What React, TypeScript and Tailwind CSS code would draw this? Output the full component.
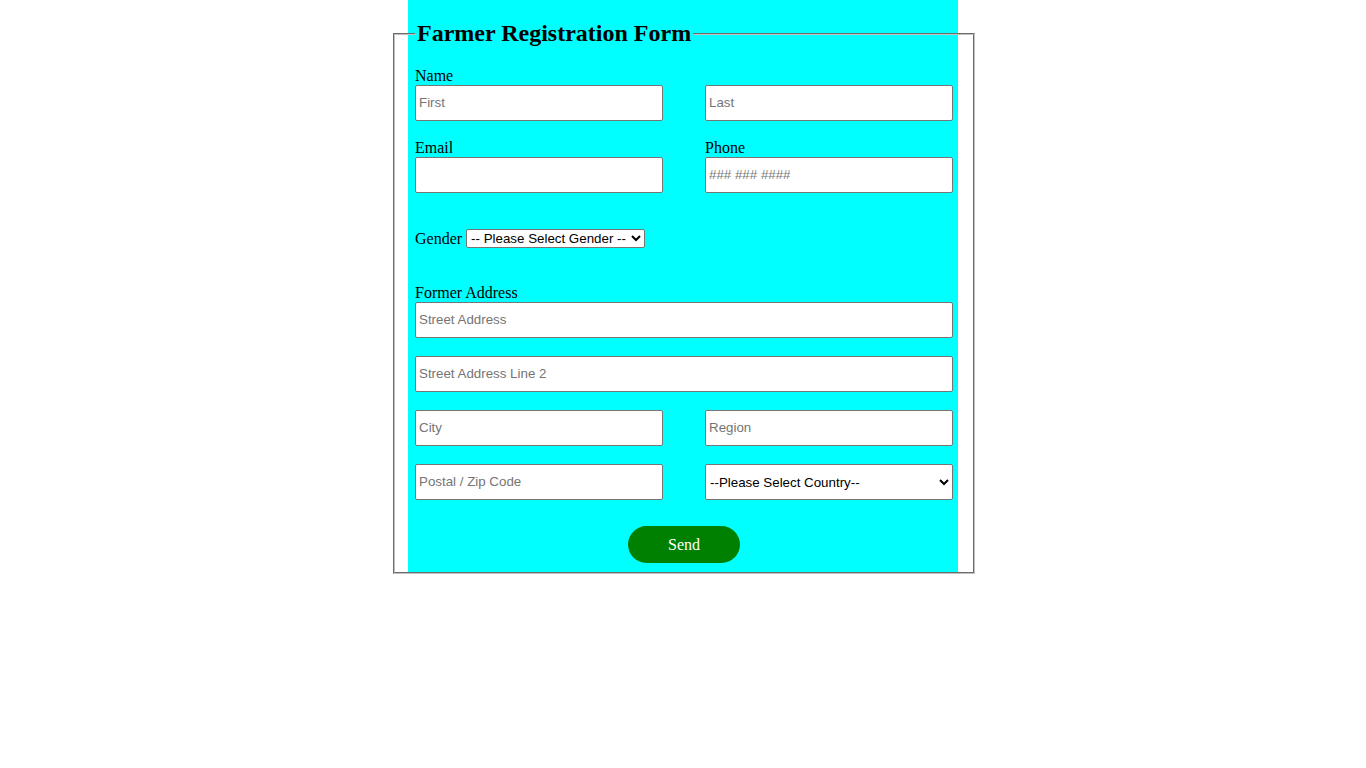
export default function App() {
  const inp =
    "block w-full h-[36px] border border-[#767676] rounded-[2px] bg-white pl-[3px] pr-[2px] pb-[1px] text-[13.333px] font-['Liberation_Sans',Arial,sans-serif] text-black placeholder:text-[#757575] outline-none";
  const lbl = "block leading-[18px] text-[16px]";
  return (
    <div className="min-h-[768px] bg-white font-['Liberation_Serif','Times_New_Roman',serif] text-[16px] text-black">
      <div className="mx-auto w-[550px] bg-[#00ffff] pt-[20px]">
        <fieldset className="w-[582px] -ml-[15px] [border:2px_groove_rgb(192,192,192)] px-[20px] pb-[9px] min-w-0">
          <legend className="px-[2px] text-[24px] font-bold leading-[27px]">Farmer Registration Form</legend>
          <div className="mt-[20px]">
            <label className={lbl}>Name</label>
            <div className="grid grid-cols-2 gap-x-[42px]">
              <input className={inp} placeholder="First" />
              <input className={inp} placeholder="Last" />
            </div>
          </div>
          <div className="mt-[18px] grid grid-cols-2 gap-x-[42px]">
            <div>
              <label className={lbl}>Email</label>
              <input className={inp} />
            </div>
            <div>
              <label className={lbl}>Phone</label>
              <input className={inp} placeholder="### ### ####" />
            </div>
          </div>
          <div className="mt-[36px] flex h-[19px] items-center gap-[4px]">
            <span className="leading-[18px]">Gender</span>
            <select className="h-[19px] w-[179px] border border-[#767676] rounded-[2px] bg-white text-[13.333px] font-['Liberation_Sans',Arial,sans-serif] text-black">
              <option>-- Please Select Gender --</option>
              <option>Male</option>
              <option>Female</option>
            </select>
          </div>
          <div className="mt-[36px]">
            <label className={lbl}>Former Address</label>
            <input className={inp} placeholder="Street Address" />
          </div>
          <div className="mt-[18px]">
            <input className={inp} placeholder="Street Address Line 2" />
          </div>
          <div className="mt-[18px] grid grid-cols-2 gap-x-[42px]">
            <input className={inp} placeholder="City" />
            <input className={inp} placeholder="Region" />
          </div>
          <div className="mt-[18px] grid grid-cols-2 gap-x-[42px]">
            <input className={inp} placeholder="Postal / Zip Code" />
            <select className="block h-[36px] w-full border border-[#767676] rounded-[2px] bg-white text-[13.333px] font-['Liberation_Sans',Arial,sans-serif] text-black">
              <option>--Please Select Country--</option>
            </select>
          </div>
          <div className="mt-[26px] flex justify-center">
            <button className="h-[37px] w-[112px] rounded-full bg-[#008000] text-[16px] text-white">Send</button>
          </div>
        </fieldset>
      </div>
    </div>
  );
}
